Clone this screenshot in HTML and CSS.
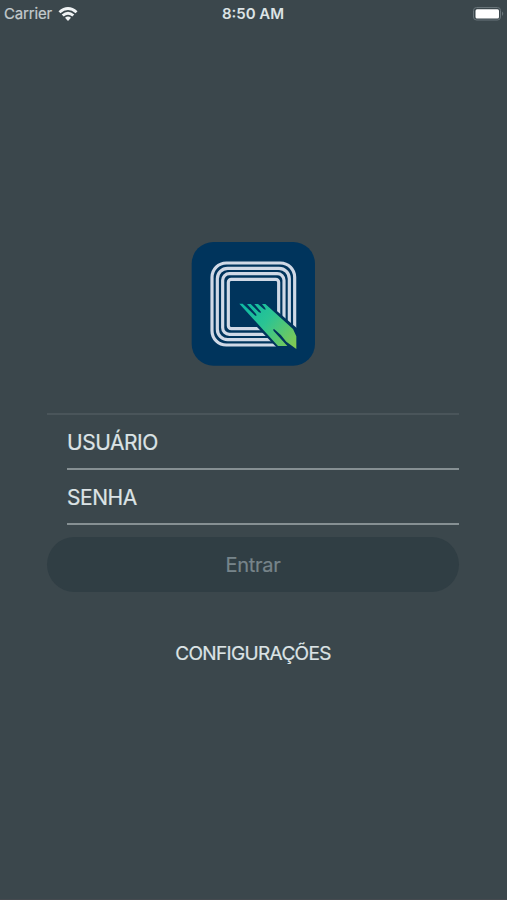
FILE: index.html
```html
<!DOCTYPE html>
<html lang="pt-BR">
<head>
<meta charset="utf-8">
<meta name="viewport" content="width=device-width">
<title>Entrar</title>
<link rel="stylesheet" href="styles.css">
</head>
<body>
<div class="screen">
  <header class="status">
    <div class="network">
      <span class="carrier">Carrier</span>
      <svg class="wifi" viewBox="0 0 20 16" aria-hidden="true">
        <path d="M0.5 5.2Q10-3.2 19.5 5.2L17.6 7.2Q10 .7 2.4 7.2Z"/>
        <path d="M3.7 8.5Q10 3.2 16.3 8.5L14.3 10.5Q10 7 5.7 10.5Z"/>
        <path d="M7 11.8Q10 9.3 13 11.8L10 15Z"/>
      </svg>
    </div>
    <time class="clock">8:50 AM</time>
    <svg class="battery" viewBox="0 0 34 16" aria-hidden="true">
      <rect class="battery-shell" x="2.5" y="1.5" width="27" height="12.5" rx="3"/>
      <rect class="battery-level" x="4.5" y="3.2" width="23.5" height="9.3" rx="1.5"/>
      <path class="battery-tip" d="M31 5.5Q33.5 7.7 31 10Z"/>
    </svg>
  </header>
  <main class="login">
    <svg class="logo" viewBox="0 0 408 408" aria-hidden="true">
      <defs>
        <linearGradient id="hand" gradientUnits="userSpaceOnUse" x1="185" y1="210" x2="330" y2="330">
          <stop offset="0" stop-color="#10bba2"/>
          <stop offset=".4" stop-color="#2bc493"/>
          <stop offset="1" stop-color="#82c952"/>
        </linearGradient>
      </defs>
      <rect x="20" y="18" width="370" height="371" rx="65" fill="#00345c"/>
      <g fill="none" stroke="#d0d9e6" stroke-width="9.5">
        <rect x="81" y="81" width="248" height="246" rx="43"/>
        <rect x="97" y="97" width="216" height="214" rx="31"/>
        <rect x="113" y="113" width="184" height="182" rx="20"/>
        <rect x="130" y="130" width="151" height="148" rx="9"/>
      </g>
      <path fill="#00345c" d="M208 265L276 335H345V284L266 217Z"/>
      <path fill="url(#hand)" d="M163 203H173L209 238Q217 243 213 234L186 204H197L222 229Q231 233 226 225L208 204H219L237 220Q245 224 240 215L231 204H241L324 279L334 301V339L304 317Q289 296 268 280Q262 278 266 285L307 330H279Z"/>
    </svg>
    <form class="form">
      <div class="fields">
        <div class="field">USUÁRIO</div>
        <div class="field">SENHA</div>
      </div>
      <button class="submit" type="button" disabled>Entrar</button>
    </form>
    <a class="settings">CONFIGURAÇÕES</a>
  </main>
</div>
</body>
</html>
```
FILE: styles.css
```css
* { box-sizing: border-box; }
body { margin: 0; background: #3b474c; font-family: Inter, "Liberation Sans", sans-serif; }
.screen { height: 900px; display: flex; flex-direction: column; color: #dce3e5; border-bottom: 1px solid #454a4f; }
.status { height: 28px; display: grid; grid-template-columns: 1fr auto 1fr; align-items: center; padding: 0 2px 1px 4px; font-size: 15px; }
.network { display: flex; align-items: center; gap: 6px; }
.carrier { color: #c3cbce; letter-spacing: -.15px; -webkit-text-stroke: .2px; }
.wifi { width: 20px; height: 16px; fill: #f0f3f4; }
.clock { margin-right: 3px; font-weight: 600; letter-spacing: 0; }
.battery { width: 34px; height: 16px; justify-self: end; }
.battery-shell { fill: none; stroke: #69757a; }
.battery-level { fill: #fff; }
.battery-tip { fill: #69757a; }
.login { display: flex; flex-direction: column; align-items: center; padding: 208px 1px 0 0; }
.logo { width: 136px; height: 136px; }
.form { width: 412px; margin-top: 41px; }
.fields { border-top: 2px solid #4a555a; padding-left: 20px; }
.field { height: 55px; padding-top: 1px; border-bottom: 2px solid #869093; display: flex; align-items: center; font-size: 21px; letter-spacing: -.45px; -webkit-text-stroke: .2px; }
.submit { display: block; width: 100%; height: 55px; margin-top: 12px; padding: 0; border: 0; border-radius: 28px; background: #303e44; color: #77848a; font: 20px Inter, sans-serif; letter-spacing: -.3px; -webkit-text-stroke: .2px; }
.settings { margin-top: 49px; font-size: 19px; line-height: 25px; letter-spacing: -.65px; -webkit-text-stroke: .2px; }
```
